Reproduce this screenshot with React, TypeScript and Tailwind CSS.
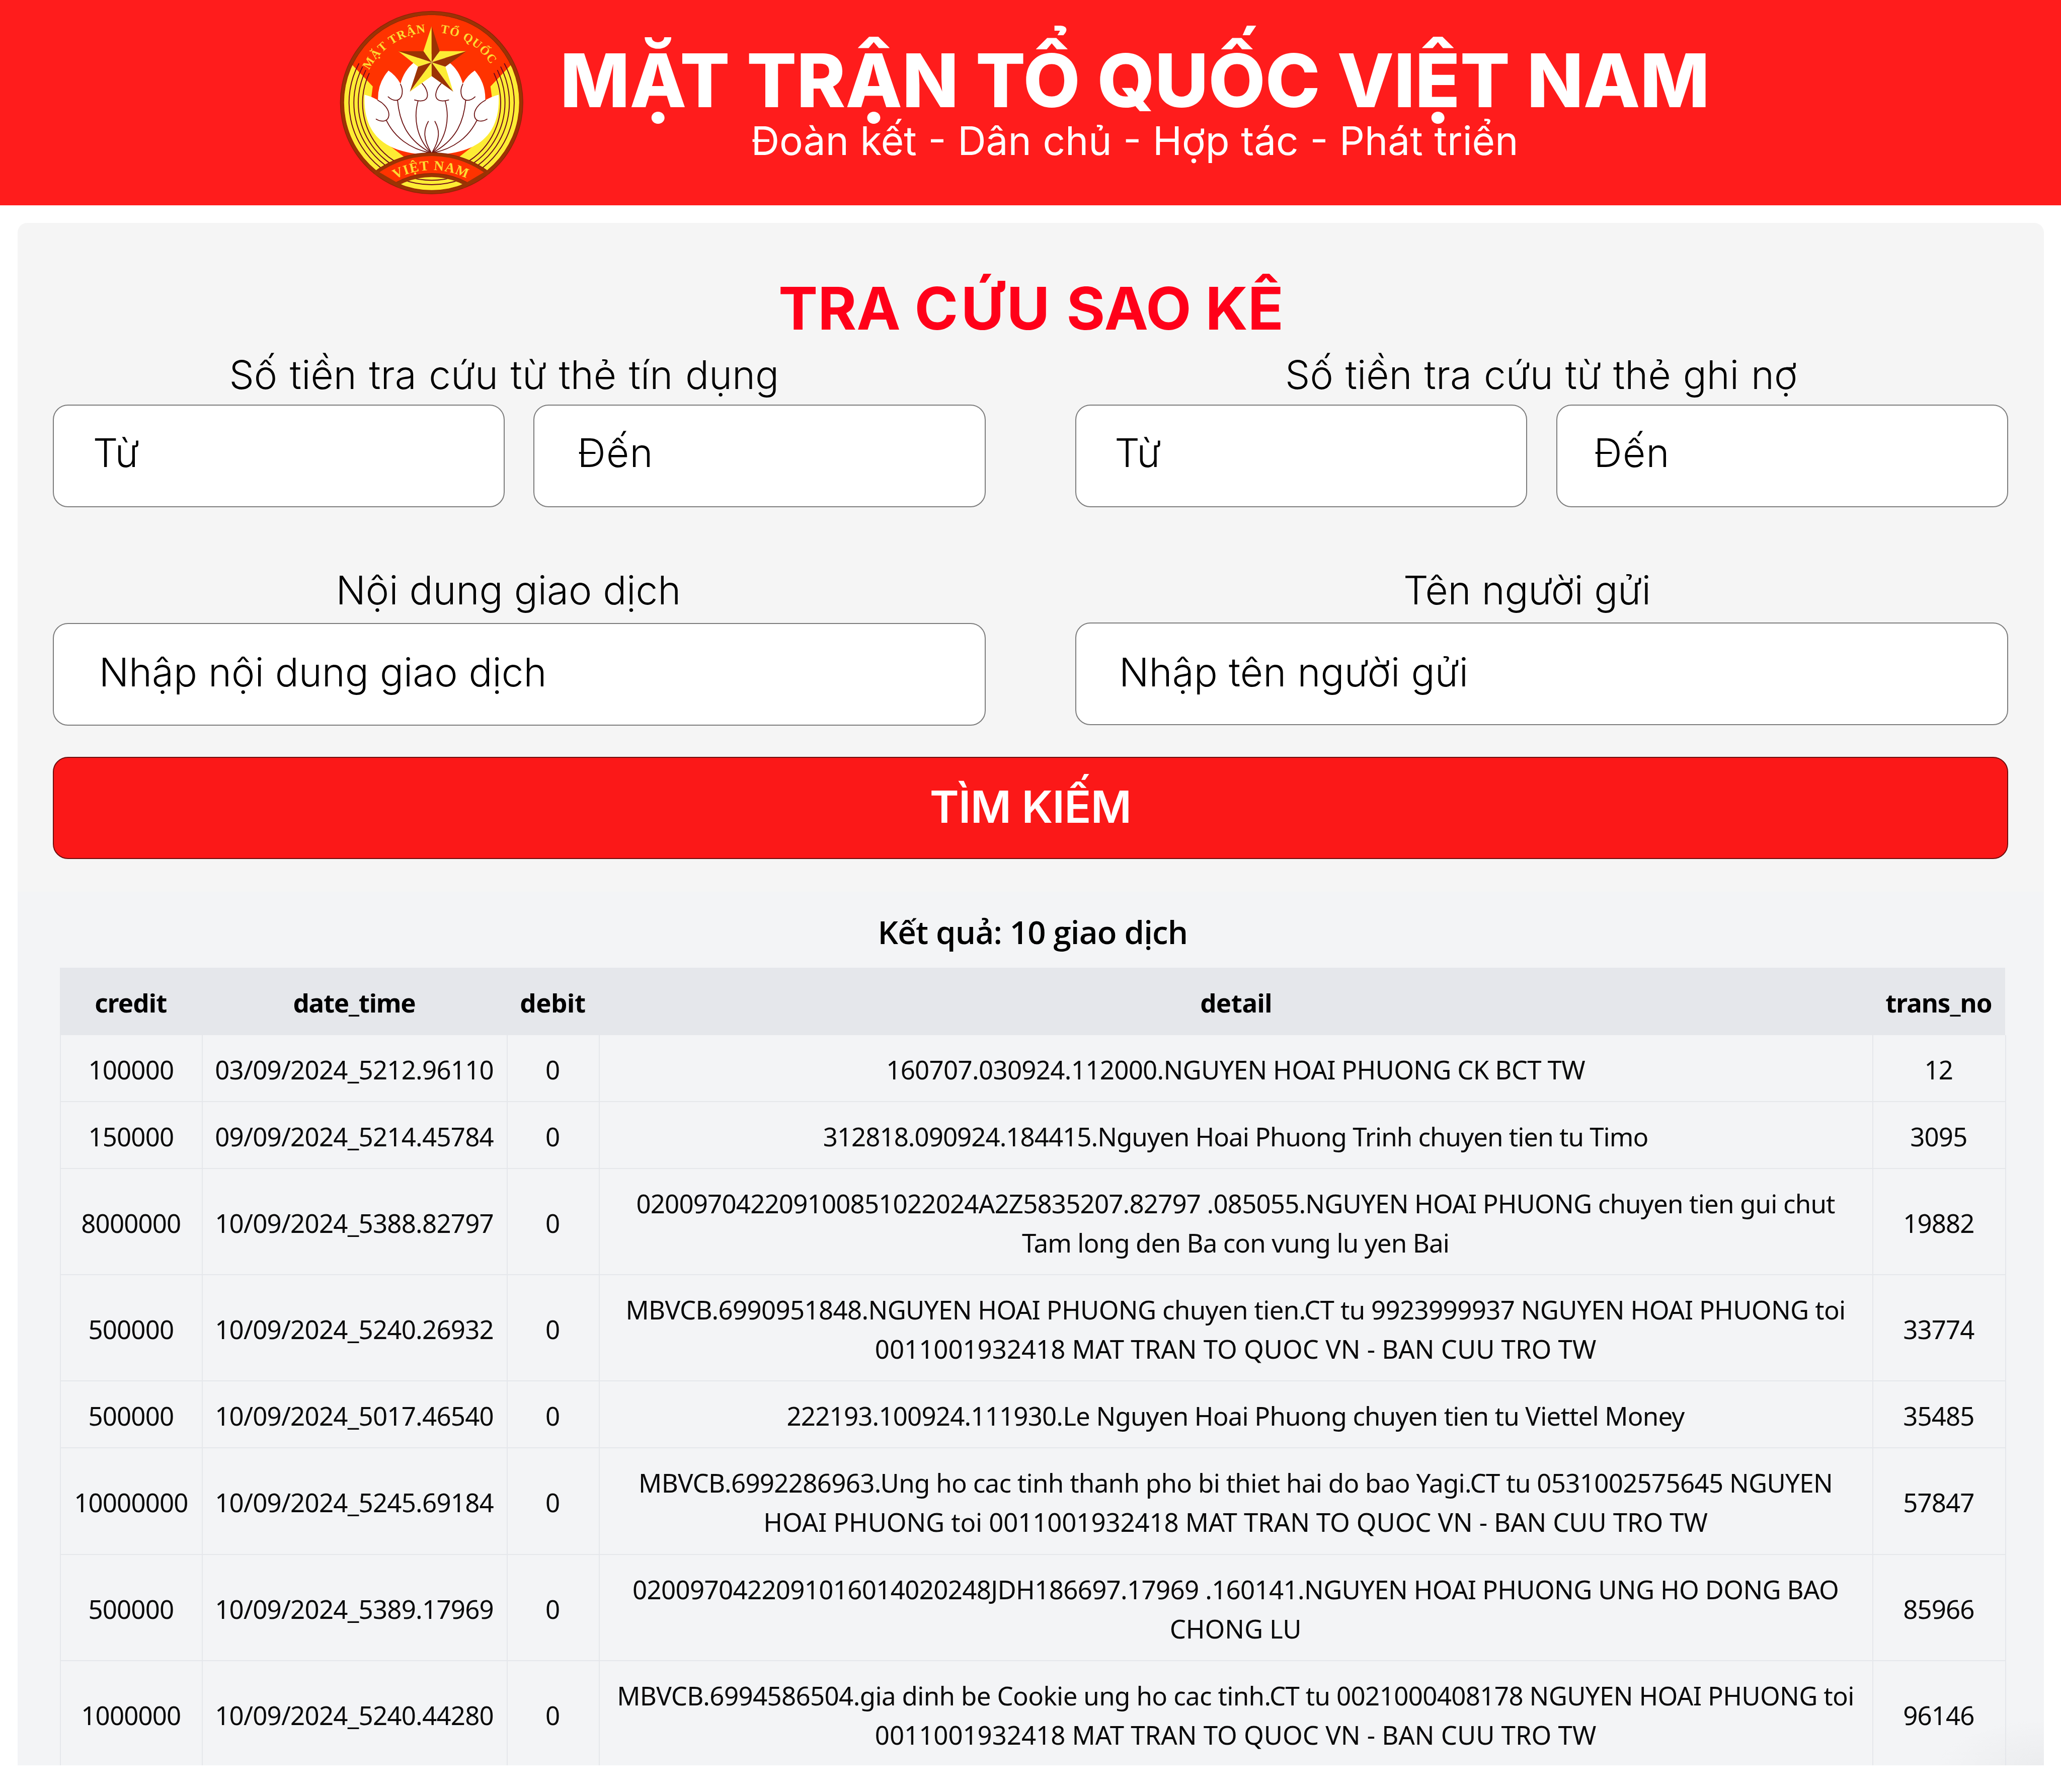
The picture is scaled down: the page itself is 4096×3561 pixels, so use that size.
type Line = { text: string; track: string };
type Row = {
  credit: string;
  dateTime: string;
  debit: string;
  detail: Line[];
  transNo: string;
  height: string;
};

const SINGLE = "h-[133.1px]";
const DOUBLE = "h-[211.15px]";

const ROWS: Row[] = [
  {
    credit: "100000",
    dateTime: "03/09/2024_5212.96110",
    debit: "0",
    detail: [{ text: "160707.030924.112000.NGUYEN HOAI PHUONG CK BCT TW", track: "tracking-[-0.7px]" }],
    transNo: "12",
    height: SINGLE,
  },
  {
    credit: "150000",
    dateTime: "09/09/2024_5214.45784",
    debit: "0",
    detail: [{ text: "312818.090924.184415.Nguyen Hoai Phuong Trinh chuyen tien tu Timo", track: "tracking-[-0.985px]" }],
    transNo: "3095",
    height: SINGLE,
  },
  {
    credit: "8000000",
    dateTime: "10/09/2024_5388.82797",
    debit: "0",
    detail: [
      { text: "020097042209100851022024A2Z5835207.82797 .085055.NGUYEN HOAI PHUONG chuyen tien gui chut", track: "tracking-[-0.825px]" },
      { text: "Tam long den Ba con vung lu yen Bai", track: "tracking-[-0.89px]" },
    ],
    transNo: "19882",
    height: DOUBLE,
  },
  {
    credit: "500000",
    dateTime: "10/09/2024_5240.26932",
    debit: "0",
    detail: [
      { text: "MBVCB.6990951848.NGUYEN HOAI PHUONG chuyen tien.CT tu 9923999937 NGUYEN HOAI PHUONG toi", track: "tracking-[-0.665px]" },
      { text: "0011001932418 MAT TRAN TO QUOC VN - BAN CUU TRO TW", track: "tracking-[-0.05px]" },
    ],
    transNo: "33774",
    height: DOUBLE,
  },
  {
    credit: "500000",
    dateTime: "10/09/2024_5017.46540",
    debit: "0",
    detail: [{ text: "222193.100924.111930.Le Nguyen Hoai Phuong chuyen tien tu Viettel Money", track: "tracking-[-0.83px]" }],
    transNo: "35485",
    height: SINGLE,
  },
  {
    credit: "10000000",
    dateTime: "10/09/2024_5245.69184",
    debit: "0",
    detail: [
      { text: "MBVCB.6992286963.Ung ho cac tinh thanh pho bi thiet hai do bao Yagi.CT tu 0531002575645 NGUYEN", track: "tracking-[-0.7px]" },
      { text: "HOAI PHUONG toi 0011001932418 MAT TRAN TO QUOC VN - BAN CUU TRO TW", track: "tracking-[-0.15px]" },
    ],
    transNo: "57847",
    height: DOUBLE,
  },
  {
    credit: "500000",
    dateTime: "10/09/2024_5389.17969",
    debit: "0",
    detail: [
      { text: "0200970422091016014020248JDH186697.17969 .160141.NGUYEN HOAI PHUONG UNG HO DONG BAO", track: "tracking-[-0.68px]" },
      { text: "CHONG LU", track: "tracking-[-0.1px]" },
    ],
    transNo: "85966",
    height: DOUBLE,
  },
  {
    credit: "1000000",
    dateTime: "10/09/2024_5240.44280",
    debit: "0",
    detail: [
      { text: "MBVCB.6994586504.gia dinh be Cookie ung ho cac tinh.CT tu 0021000408178 NGUYEN HOAI PHUONG toi", track: "tracking-[-0.645px]" },
      { text: "0011001932418 MAT TRAN TO QUOC VN - BAN CUU TRO TW", track: "tracking-[-0.05px]" },
    ],
    transNo: "96146",
    height: DOUBLE,
  },
];

const COLS = "grid grid-cols-[282.4px_606px_182.8px_2531.3px_263.4px]";

/* One half of the lotus veins; drawn twice, the second time mirrored. */
function Veins() {
  return (
    <g fill="none" stroke="#6b1111" strokeWidth="5.5" strokeLinecap="round">
      <path d="M295 612 C335 632 366 672 362 706 C358 742 320 748 285 727" />
      <path d="M348 737 C398 838 490 908 612 932" />
      <path d="M433 514 C452 550 447 600 415 611 C395 616 375 607 358 591" />
      <path d="M415 611 C428 760 485 860 615 931" />
      <path d="M565 510 C590 535 602 570 596 592 C588 618 555 621 519 610" />
      <path d="M540 617 C512 720 530 840 618 931" />
      <path d="M603 741 C572 795 572 850 620 931" />
    </g>
  );
}

function Emblem() {
  return (
    <svg viewBox="62 65 1122 1122" className="h-[365.6px] w-[365.6px] shrink-0">
      <defs>
        <clipPath id="disc">
          <circle cx="623" cy="626" r="534" />
        </clipPath>
        <clipPath id="foot">
          <circle cx="623" cy="1512" r="432" />
        </clipPath>
        <path id="arcLeft" d="M241.6 428.5 A430 430 0 0 1 589.3 198.3" />
        <path id="arcRight" d="M675.4 200.2 A430 430 0 0 1 985.7 396" />
        <path id="arcBanner" d="M400.5 1093.5 A474 474 0 0 1 838.2 1089.7" />
      </defs>
      <circle cx="623" cy="626" r="559" fill="#8a2208" />
      <circle cx="623" cy="626" r="555" fill="#9b3304" />
      <circle cx="623" cy="626" r="536" fill="#8a2208" />
      <g clipPath="url(#disc)">
        <circle cx="623" cy="626" r="534" fill="#ff3300" />
        <path d="M97 352 L264 528 L252 620 L300 820 L372 893 L455 957 L290 1100 L0 1100 V352 Z" fill="#fdec34" />
        <path d="M1149 352 L982 528 L994 620 L946 820 L874 893 L791 957 L956 1100 L1246 1100 V352 Z" fill="#fdec34" />
        <g fill="none" stroke="#6b0a1e" strokeWidth="6" strokeLinecap="round">
          <path d="M179 389 A504 504 0 0 0 310 1022" />
          <path d="M201 409 A477 477 0 0 0 340 1008" />
          <path d="M221 430 A450 450 0 0 0 368 996" />
          <path d="M242 448 A422 422 0 0 0 396 983" />
          <path d="M1067 389 A504 504 0 0 1 936 1022" />
          <path d="M1045 409 A477 477 0 0 1 906 1008" />
          <path d="M1025 430 A450 450 0 0 1 878 996" />
          <path d="M1004 448 A422 422 0 0 1 850 983" />
        </g>
        <path
          d="M214 578 Q256 588 296 612 Q292 508 360 431 Q405 460 433 511 Q455 430 515 382 L560 330 H686 L731 382 Q791 430 813 511 Q841 460 886 431 Q954 508 950 612 Q990 588 1032 578 C1042 790 940 910 720 938 H526 C306 910 204 790 214 578 Z"
          fill="#ffffff"
        />
        <Veins />
        <g transform="translate(1246 0) scale(-1 1)">
          <Veins />
        </g>
        <circle cx="623" cy="1512" r="582" fill="#8a2208" />
        <circle cx="623" cy="1512" r="579" fill="#9b3304" />
        <circle cx="623" cy="1512" r="560" fill="#ff3300" />
        <circle cx="623" cy="1512" r="456" fill="#8a2208" />
        <circle cx="623" cy="1512" r="453" fill="#9b3304" />
        <circle cx="623" cy="1512" r="432" fill="#fdec34" />
        <g clipPath="url(#foot)" fill="none" stroke="#6b0a1e" strokeWidth="6">
          <circle cx="623" cy="626" r="474" />
          <circle cx="623" cy="626" r="501" />
        </g>
      </g>
      {/* banner end caps merge with the rim */}
      <g fill="#9b3304">
        <path d="M303 1050 L411 1113 L445 1128 L430 1150 L270 1060 Z" />
        <path d="M943 1050 L832 1116 L801 1128 L816 1150 L976 1060 Z" />
      </g>
      <g fill="#fdec34">
        <path d="M623 380 L573 313 L623 160 Z" />
        <path d="M623 380 L672 312 L835 313 Z" />
        <path d="M623 380 L707 407 L755 560 Z" />
        <path d="M623 380 L623 465 L490 560 Z" />
        <path d="M623 380 L540 407 L420 313 Z" />
      </g>
      <g fill="#9b3304">
        <path d="M623 380 L623 160 L672 312 Z" />
        <path d="M623 380 L835 313 L707 407 Z" />
        <path d="M623 380 L755 560 L623 465 Z" />
        <path d="M623 380 L490 560 L540 407 Z" />
        <path d="M623 380 L420 313 L573 313 Z" />
      </g>
      <g fill="#fddc34" className="font-['Liberation_Serif',serif] font-bold">
        <text fontSize="74" textLength="432">
          <textPath href="#arcLeft" textLength="432">MẶT TRẬN</textPath>
        </text>
        <text fontSize="74" textLength="376">
          <textPath href="#arcRight" textLength="376">TỔ QUỐC</textPath>
        </text>
        <text fontSize="84" textLength="452">
          <textPath href="#arcBanner" textLength="452">VIỆT NAM</textPath>
        </text>
      </g>
    </svg>
  );
}

function Field({ className, text, textClass }: { className: string; text: string; textClass: string }) {
  return (
    <div className={`h-[204px] rounded-[30px] border-2 border-[#7c7c7c] bg-white ${className}`}>
      <span className={`block whitespace-nowrap leading-[100px] ${textClass}`}>{text}</span>
    </div>
  );
}

export default function App() {
  return (
    <div className="flex h-[3561px] w-[4096px] flex-col overflow-hidden bg-white font-['Inter',sans-serif] text-black">
      <header className="flex h-[407.6px] shrink-0 items-start bg-[#ff1c1c] pt-[21.2px] pl-[675.2px] text-white">
        <Emblem />
        <div className="ml-[72.5px] pt-[63.6px]">
          <h1 className="text-[146.6px] leading-[150px] font-extrabold [word-spacing:1.6px] whitespace-nowrap">
            MẶT TRẬN TỔ QUỐC VIỆT NAM
          </h1>
          <p className="pl-[379.4px] text-[78.2px] leading-[90px] font-normal [word-spacing:0.7px] whitespace-nowrap">
            Đoàn kết - Dân chủ - Hợp tác - Phát triển
          </p>
        </div>
      </header>

      <main className="mt-[35.2px] ml-[35.2px] flex h-[3065.7px] w-[4026.6px] shrink-0 flex-col overflow-hidden rounded-t-[19px] bg-[#f5f5f5]">
        <section className="h-[1329.5px] shrink-0 pt-[109.5px] pr-[71px] pl-[69.9px] text-[78.2px] font-light">
          <h2 className="pl-[1441.8px] text-[117.3px] leading-[120px] font-bold whitespace-nowrap text-[#ff0019]">
            TRA <span className="tracking-[5.3px]">CỨU</span> SAO KÊ
          </h2>

          <div className="mt-[23px] flex justify-between">
            <div className="w-[1853.6px]">
              <div className="pl-[350.4px] leading-[100px] [word-spacing:2.6px] whitespace-nowrap">
                Số tiền tra cứu từ thẻ tín dụng
              </div>
              <div className="mt-[8.6px] flex justify-between">
                <Field className="w-[898.2px]" text="Từ" textClass="pt-[44.3px] pl-[77.6px]" />
                <Field className="w-[898.2px]" text="Đến" textClass="pt-[44.3px] pl-[85px] tracking-[1.2px]" />
              </div>
            </div>
            <div className="w-[1853.6px]">
              <div className="pl-[416.8px] leading-[100px] [word-spacing:2px] whitespace-nowrap">
                Số tiền tra cứu từ thẻ ghi nợ
              </div>
              <div className="mt-[8.6px] flex justify-between">
                <Field className="w-[898.2px]" text="Từ" textClass="pt-[44.3px] pl-[76.1px]" />
                <Field className="w-[898.2px]" text="Đến" textClass="pt-[44.3px] pl-[73px] tracking-[1.2px]" />
              </div>
            </div>
          </div>

          <div className="mt-[115.1px] flex justify-between">
            <div className="w-[1853.6px]">
              <div className="pl-[562.4px] leading-[100px] whitespace-nowrap">Nội dung giao dịch</div>
              <Field className="mt-[14.9px]" text="Nhập nội dung giao dịch" textClass="pt-[46.3px] pl-[89.6px]" />
            </div>
            <div className="w-[1853.6px]">
              <div className="pl-[651.9px] leading-[100px] tracking-[-0.3px] whitespace-nowrap">Tên người gửi</div>
              <Field className="mt-[14px]" text="Nhập tên người gửi" textClass="pt-[47.2px] pl-[84.8px] tracking-[0.12px]" />
            </div>
          </div>

          <button className="mt-[62.1px] block h-[203.5px] w-full rounded-[30px] border-2 border-[#6e0d0d] bg-[#fb1818] pb-[6px] text-center text-[88px] leading-[120px] font-semibold tracking-[-0.75px] text-white">
            TÌM KIẾM
          </button>
        </section>

        <section className="flex-1 bg-[#f3f4f6] bg-[radial-gradient(210px_95px_at_bottom_right,#ebecee,#f3f4f6)] pt-[34.7px] font-['Noto_Sans',sans-serif]">
          <h3 className="pl-[8px] text-center font-['Open_Sans',sans-serif] text-[63.5px] leading-[90px] font-semibold tracking-[-0.796px]">
            Kết quả: 10 giao dịch
          </h3>

          <div role="table" className="mt-[25.7px] ml-[83.5px] w-[3865.9px] text-[51px] leading-[78px] whitespace-nowrap text-[#0a0a0a]">
            <div role="row" className={`${COLS} h-[134.2px] bg-[#e5e7eb] pt-[30.5px] text-center font-bold text-black`}>
              <span className="tracking-[-0.792px]">credit</span>
              <span className="tracking-[-1.2px]">date_time</span>
              <span className="tracking-[-0.4px]">debit</span>
              <span className="pl-[2px] tracking-[-0.515px]">detail</span>
              <span className="tracking-[-0.977px]">trans_no</span>
            </div>
            {ROWS.map((row, i) => (
              <div
                key={i}
                role="row"
                className={`${COLS} ${row.height} border-l-2 border-[#e5e7eb] text-center [&>*]:-ml-[2px] [&>*]:flex [&>*]:flex-col [&>*]:justify-center [&>*]:border-r-2 [&>*]:border-b-2 [&>*]:border-[#e5e7eb] [&>*]:pt-[5px]`}
              >
                <div className="pl-[1px] tracking-[-0.87px]">{row.credit}</div>
                <div className="tracking-[-0.78px]">{row.dateTime}</div>
                <div>{row.debit}</div>
                <div>
                  {row.detail.map((line) => (
                    <div key={line.text} className={line.track}>
                      {line.text}
                    </div>
                  ))}
                </div>
                <div className="tracking-[-0.9px]">{row.transNo}</div>
              </div>
            ))}
          </div>
        </section>
      </main>
    </div>
  );
}
